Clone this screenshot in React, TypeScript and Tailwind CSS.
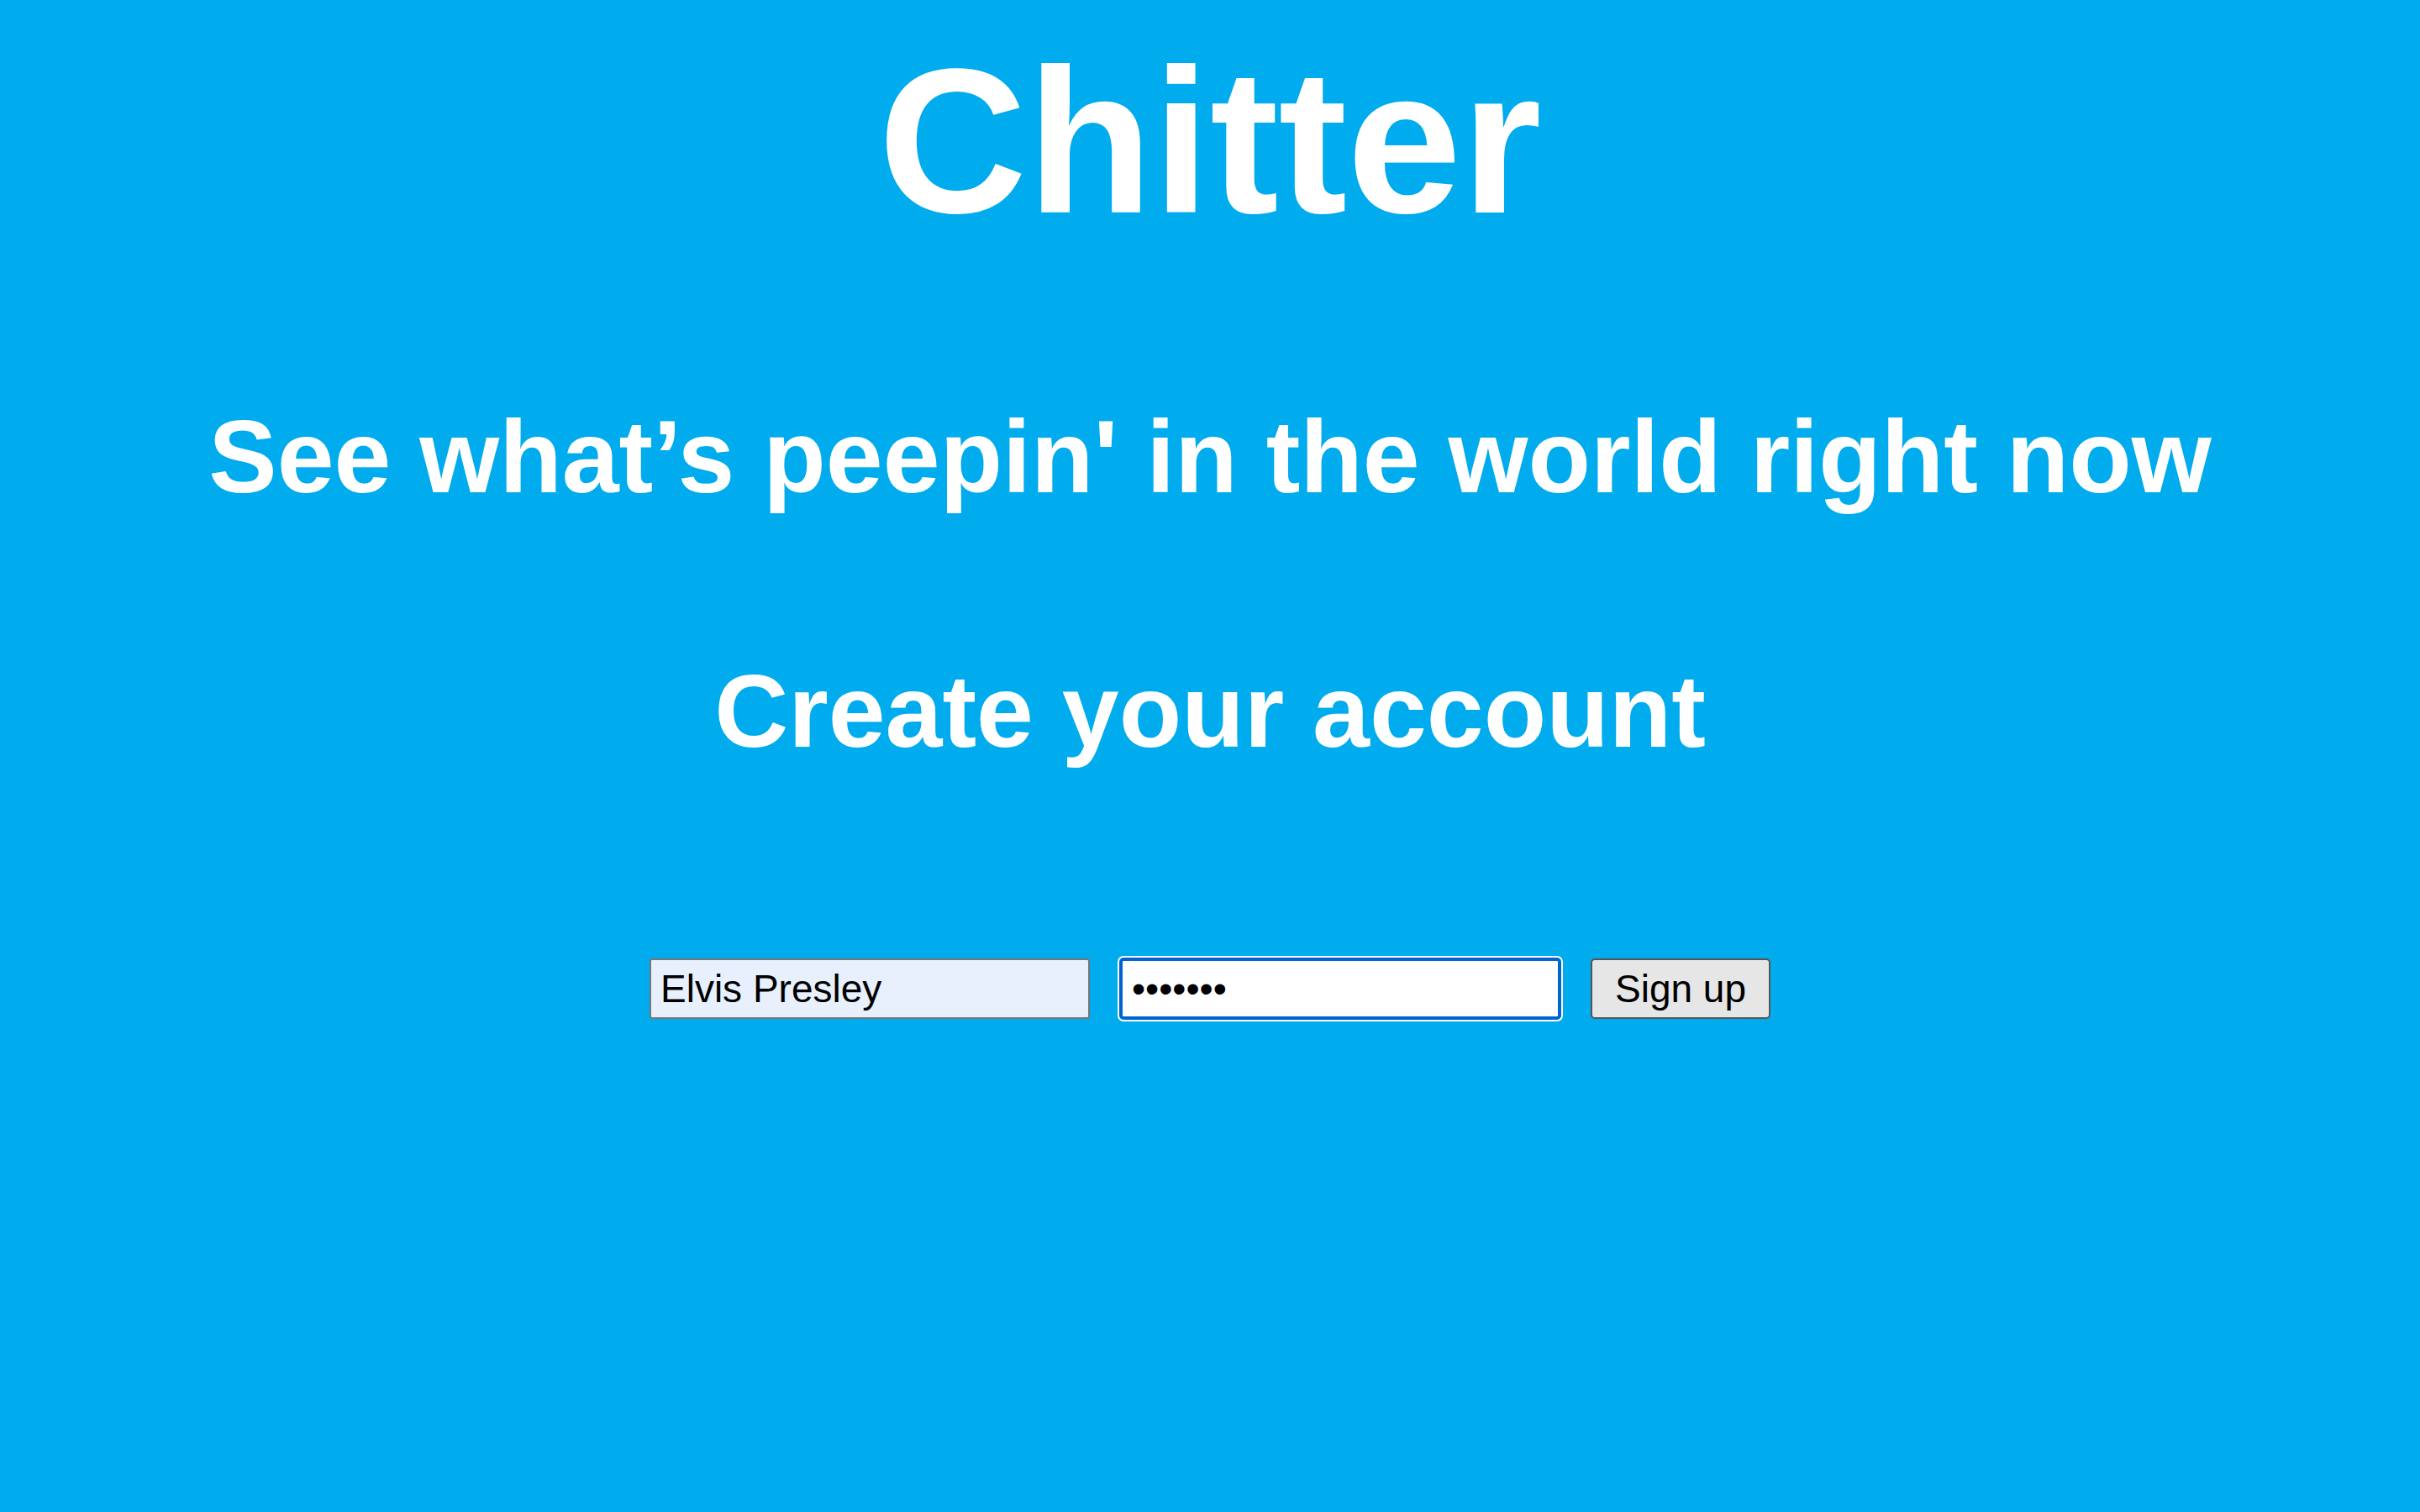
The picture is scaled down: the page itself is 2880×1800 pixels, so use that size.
import React from 'react';

const App: React.FC = () => {
  return (
    <div className="min-h-screen bg-[#00acee] text-white font-['Liberation_Sans',Arial,sans-serif] text-center flex flex-col items-center">
      <h1 className="mt-[46px] text-[245px] font-bold leading-none">Chitter</h1>
      <h2 className="mt-[192px] text-[122px] font-bold leading-none whitespace-nowrap">See what’s peepin' in the world right now</h2>
      <h2 className="mt-[181px] text-[122px] font-bold leading-none">Create your account</h2>

      {/* sign up form */}
      <form className="mt-[232px] flex items-center gap-[35px]" onSubmit={(e) => e.preventDefault()}>
        <input
          type="text"
          readOnly
          value="Elvis Presley"
          className="w-[524px] h-[72px] px-[11px] bg-[#e8f0fe] text-black text-[46px] border-2 border-[#767676] rounded-[3px] font-['Liberation_Sans',Arial,sans-serif] outline-none"
        />
        <input
          type="password"
          readOnly
          value="1234567"
          className="w-[526px] h-[74px] px-[11px] bg-white text-black text-[46px] border-4 border-[#0064d0] rounded-[5px] outline-2 outline-solid outline-white font-['Liberation_Sans',Arial,sans-serif]"
        />
        <button
          type="submit"
          className="w-[214px] h-[72px] bg-[#e6e6e6] text-black text-[46px] border-2 border-[#555555] rounded-[5px] font-['Liberation_Sans',Arial,sans-serif] leading-none"
        >
          Sign up
        </button>
      </form>
    </div>
  );
};

export default App;
